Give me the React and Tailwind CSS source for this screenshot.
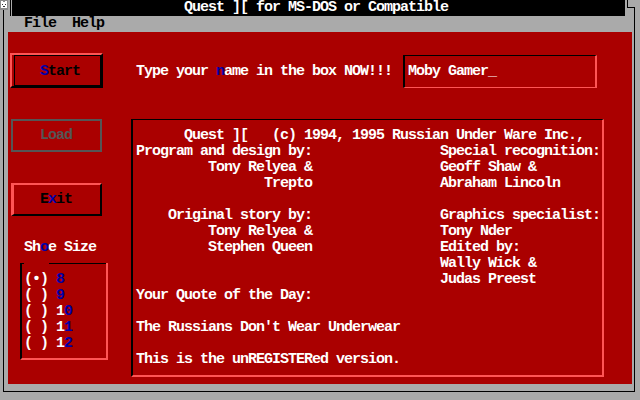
import React from 'react';

function Hot({ children }) {
  return <span className="text-[#0000aa]">{children}</span>;
}

function DosIcon() {
  return (
    <svg width="8" height="10" viewBox="0 0 8 10" shapeRendering="crispEdges">
      <rect x="0" y="0" width="8" height="10" fill="#8c8c8c" />
      <rect x="1" y="1" width="2" height="2" fill="#fff" />
      <rect x="5" y="1" width="2" height="2" fill="#fff" />
      <rect x="1" y="2" width="6" height="6" fill="#fff" />
      <rect x="2" y="4" width="1" height="1" fill="#333" />
      <rect x="5" y="4" width="1" height="1" fill="#333" />
      <rect x="3" y="6" width="2" height="1" fill="#333" />
    </svg>
  );
}

const credits = [
  '      Quest ][   (c) 1994, 1995 Russian Under Ware Inc.,',
  'Program and design by:                Special recognition:',
  '         Tony Relyea &                Geoff Shaw &',
  '                Trepto                Abraham Lincoln',
  '',
  '    Original story by:                Graphics specialist:',
  '         Tony Relyea &                Tony Nder',
  '         Stephen Queen                Edited by:',
  '                                      Wally Wick &',
  '                                      Judas Preest',
  'Your Quote of the Day:',
  '',
  "The Russians Don't Wear Underwear",
  '',
  'This is the unREGISTERed version.',
];

const sizes = [
  { mark: '•', a: '', b: '8' },
  { mark: ' ', a: '', b: '9' },
  { mark: ' ', a: '1', b: '0' },
  { mark: ' ', a: '1', b: '1' },
  { mark: ' ', a: '1', b: '2' },
];

export default function App() {
  return (
    <div className="w-[640px] h-[400px] bg-[#aaaaaa] flex flex-col overflow-hidden font-['Liberation_Mono','DejaVu_Sans_Mono',monospace] text-[15px] leading-[16px] tracking-[-1px] font-bold whitespace-pre">
      {/* title bar */}
      <div className="flex h-[16px] shrink-0">
        <div className="w-[8px] flex flex-col">
          <DosIcon />
          <div className="h-[6px] ml-[3px] border-l border-black" />
        </div>
        <div className="w-[2px]" />
        <div className="w-px bg-black" />
        <div className="w-px" />
        <div className="w-[613px] bg-black text-white pl-[172px]">Quest ][ for MS-DOS or Compatible</div>
        <div className="w-[2px]" />
        <div className="w-[8px] flex flex-col">
          <div className="h-[8px] border-l border-b border-black" />
          <div className="h-[8px] border-r border-black" />
        </div>
      </div>

      {/* window frame */}
      <div className="ml-[3px] w-[632px] h-[376px] border-l border-r border-b border-black flex flex-col shrink-0">
        <div className="h-[16px] pl-[20px] text-black">File  Help</div>

        <div className="ml-[4px] mr-[2px] h-[352px] bg-[#aa0000] flex text-white">
          {/* left column */}
          <div className="w-[123px] flex flex-col items-start">
            <div className="mt-[21px] ml-[2px] w-[93px] h-[35px] border-2 border-t-[#ff5555] border-l-[#ff5555] border-r-black border-b-black">
              <div className="h-full ml-[2px] border border-black pl-[25px] pt-[8px] text-black">
                <Hot>S</Hot>tart
              </div>
            </div>
            <div className="mt-[31px] ml-[3px] w-[91px] h-[33px] border-2 border-[#555555] pl-[27px] pt-[7px] text-[#555555]">
              Load
            </div>
            <div className="mt-[31px] ml-[3px] w-[91px] h-[33px] border-t-2 border-l-[3px] border-r-2 border-b-2 border-t-[#ff5555] border-l-[#ff5555] border-r-black border-b-black pl-[26px] pt-[7px] text-black">
              E<Hot>x</Hot>it
            </div>
            <div className="mt-[24px] ml-[16px]">
              Sh<Hot>o</Hot>e Size
            </div>
            <div className="mt-[7px] ml-[12px] w-[88px] h-[97px] border-l-2 border-l-black border-r-2 border-b-2 border-r-[#ff5555] border-b-[#ff5555] flex flex-col">
              <div className="flex h-px">
                <div className="w-[2px] bg-black" />
                <div className="w-[25px]" />
                <div className="flex-1 bg-black" />
              </div>
              <div className="mt-[8px] pl-[2px] flex flex-col">
                {sizes.map((s, i) => (
                  <div key={i} className="h-[16px]">
                    ({s.mark}) {s.a}
                    <Hot>{s.b}</Hot>
                  </div>
                ))}
              </div>
            </div>
          </div>

          {/* right column */}
          <div className="w-[473px] flex flex-col">
            <div className="mt-[23px] h-[33px] flex items-start">
              <div className="mt-[9px] ml-[5px]">
                Type your <Hot>n</Hot>ame in the box NOW!!!
              </div>
              <div className="ml-auto mr-[7px] w-[194px] h-[33px] border-t border-l-2 border-r-2 border-b border-t-black border-l-black border-r-[#ff5555] border-b-[#ff5555] pl-[3px] pt-[8px]">
                Moby Gamer_
              </div>
            </div>
            <div className="mt-[31px] h-[258px] border-t border-l-2 border-r-2 border-b-2 border-t-black border-l-black border-r-[#ff5555] border-b-[#ff5555] pl-[3px] pt-[8px] flex flex-col">
              {credits.map((line, i) => (
                <div key={i} className="h-[16px]">
                  {line}
                </div>
              ))}
            </div>
          </div>
        </div>
      </div>
    </div>
  );
}
